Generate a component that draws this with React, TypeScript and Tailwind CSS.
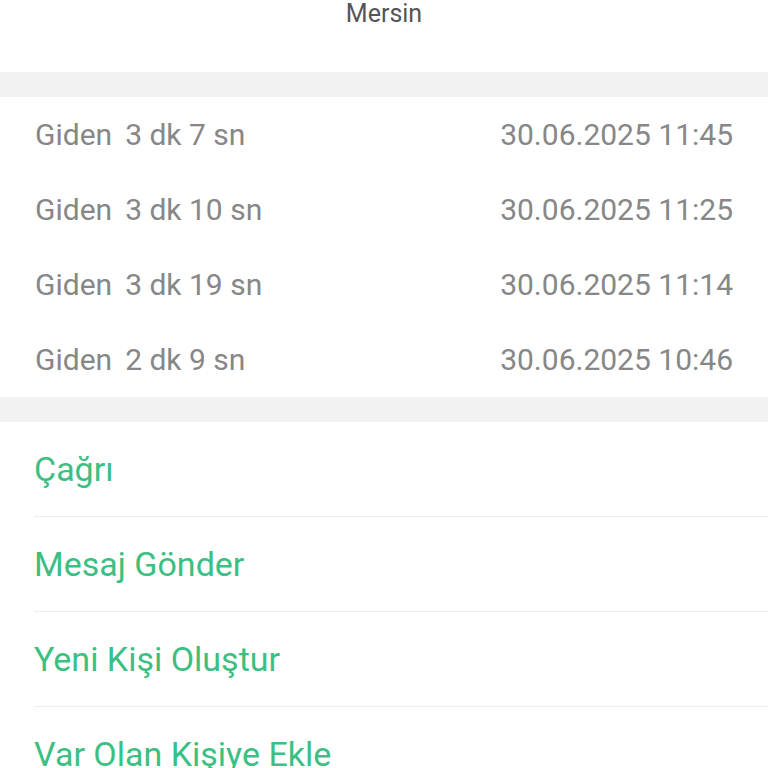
const calls = [
  { dir: "Giden", dur: "3 dk 7 sn", at: "30.06.2025 11:45" },
  { dir: "Giden", dur: "3 dk 10 sn", at: "30.06.2025 11:25" },
  { dir: "Giden", dur: "3 dk 19 sn", at: "30.06.2025 11:14" },
  { dir: "Giden", dur: "2 dk 9 sn", at: "30.06.2025 10:46" },
];

const actions = ["Çağrı", "Mesaj Gönder", "Yeni Kişi Oluştur", "Var Olan Kişiye Ekle"];

export default function App() {
  return (
    <div className="w-[768px] h-[768px] overflow-hidden bg-white font-['Roboto','Noto_Sans',sans-serif]">
      {/* header location */}
      <div className="h-[72px] flex justify-center">
        <span className="text-[25px] leading-[28px] text-[#555555]">Mersin</span>
      </div>

      <div className="h-[25px] bg-[#f2f2f2]" />

      {/* call log */}
      <div className="flex flex-col">
        {calls.map((c, i) => (
          <div key={i} className="h-[75px] pl-[35px] pr-[35px] flex items-center justify-between text-[30px] text-[#878787]">
            <span>
              {c.dir}
              <span className="ml-[13px]">{c.dur}</span>
            </span>
            <span>{c.at}</span>
          </div>
        ))}
      </div>

      <div className="h-[25px] bg-[#f2f2f2]" />

      {/* actions */}
      <div className="flex flex-col pl-[34px]">
        {actions.map((a, i) => (
          <div
            key={a}
            className={
              "h-[95px] flex items-center text-[34px] text-[#3cbf82] " +
              (i < actions.length - 1 ? "border-b border-[#ececec]" : "")
            }
          >
            {a}
          </div>
        ))}
      </div>
    </div>
  );
}
